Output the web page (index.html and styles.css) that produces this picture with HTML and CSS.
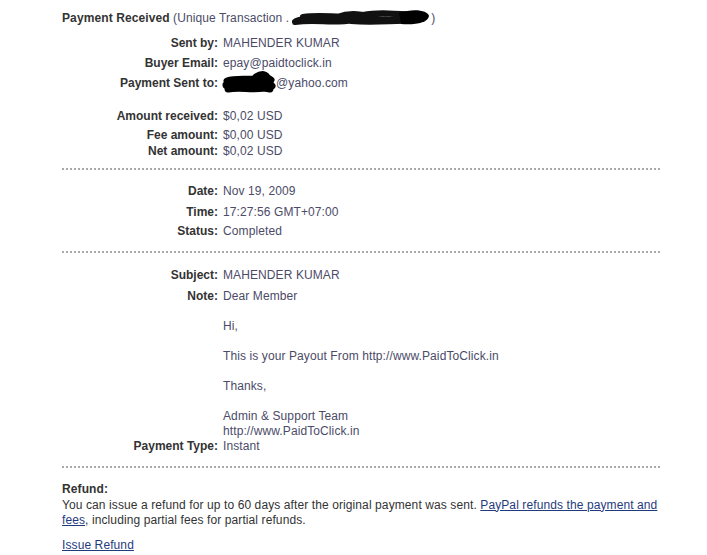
FILE: index.html
```html
<!DOCTYPE html>
<html>
<head>
<meta charset="utf-8">
<link rel="stylesheet" href="styles.css">
</head>
<body>
<div class="page">
  <div class="title"><b>Payment Received</b> (Unique Transaction .<svg class="scribble s1" width="140" height="20" viewBox="0 0 140 20"><path d="M5 13 C20 7 32 14 46 9 S72 6 86 11 S110 5 126 9 M4 14 C26 11 42 16 62 12 S96 14 116 11 M12 9 C32 6 52 11 72 7 S104 7 122 6 M60 13 C86 15 104 12 120 13" fill="none" stroke="#111" stroke-width="6" stroke-linecap="round"/><path d="M108 5 C122 0 137 2 138 8 C137 15 124 17 110 16 Z" fill="#000"/></svg>)</div>

  <div class="group g1">
    <div class="field"><span class="label">Sent by:</span><span class="value">MAHENDER KUMAR</span></div>
    <div class="field"><span class="label">Buyer Email:</span><span class="value">epay@paidtoclick.in</span></div>
    <div class="field"><span class="label">Payment Sent to:</span><span class="value"><svg class="scribble s2" width="54" height="24" viewBox="0 0 54 24"><path d="M5 10 C14 7 24 9 34 8 S45 6 49 9 M4 14 C15 12 27 14 39 13 S48 13 50 15 M6 18 C18 16 30 19 42 17 L48 18 M34 6 C40 2 44 3 46 8" fill="none" stroke="#000" stroke-width="7" stroke-linecap="round"/></svg>@yahoo.com</span></div>
  </div>

  <div class="group g2">
    <div class="field"><span class="label">Amount received:</span><span class="value">$0,02 USD</span></div>
    <div class="field f-fee"><span class="label">Fee amount:</span><span class="value">$0,00 USD</span></div>
    <div class="field f-net"><span class="label">Net amount:</span><span class="value">$0,02 USD</span></div>
  </div>

  <div class="dots d1"></div>

  <div class="group g3">
    <div class="field"><span class="label">Date:</span><span class="value">Nov 19, 2009</span></div>
    <div class="field f-time"><span class="label">Time:</span><span class="value">17:27:56 GMT+07:00</span></div>
    <div class="field f-status"><span class="label">Status:</span><span class="value">Completed</span></div>
  </div>

  <div class="dots d2"></div>

  <div class="group g4">
    <div class="field"><span class="label">Subject:</span><span class="value">MAHENDER KUMAR</span></div>
    <div class="field f-note"><span class="label">Note:</span><span class="value">Dear Member<br><br>Hi,<br><br>This is your Payout From http://www.PaidToClick.in<br><br>Thanks,<br><br>Admin &amp; Support Team<br>http://www.PaidToClick.in</span></div>
    <div class="field f-type"><span class="label">Payment Type:</span><span class="value">Instant</span></div>
  </div>

  <div class="dots d3"></div>

  <div class="refund">
    <div class="refund-title">Refund:</div>
    <p class="refund-text">You can issue a refund for up to 60 days after the original payment was sent. <a href="#">PayPal refunds the payment and fees</a>, including partial fees for partial refunds.</p>
    <a class="issue" href="#">Issue Refund</a>
  </div>
</div>
</body>
</html>
```
FILE: styles.css
```css
html, body {
  margin: 0;
  padding: 0;
  background: #fff;
}
body {
  font-family: "Liberation Sans", Arial, sans-serif;
  font-size: 12px;
  color: #4b4b68;
  letter-spacing: 0.1px;
}
.page {
  padding: 11px 0 0 62px;
  width: 599px;
}
.title {
  line-height: 15px;
  height: 15px;
  white-space: nowrap;
}
.title b {
  color: #333;
}
.scribble {
  display: inline-block;
  vertical-align: middle;
}
.s1 {
  margin: -6px 0 -4px 2px;
}
.s2 {
  margin: -8px 0 -6px -1px;
}
.group {
  display: flex;
  flex-direction: column;
  gap: 5px;
}
.field {
  display: flex;
  line-height: 15px;
}
.label {
  flex: 0 0 161px;
  text-align: right;
  font-weight: bold;
  color: #333;
  padding-right: 5px;
  box-sizing: border-box;
  white-space: nowrap;
  letter-spacing: 0;
}
.value {
  flex: 1;
}
.g1 { margin-top: 10px; }
.g2 { margin-top: 18px; }
.f-fee { margin-top: -1px; }
.f-net { margin-top: -4px; }
.g3 { margin-top: 14px; }
.f-time { margin-top: 1px; }
.f-status { margin-top: -1px; }
.g4 { margin-top: 15px; }
.f-note { margin-top: 1px; }
.f-type { margin-top: -5px; }
.dots {
  height: 2px;
  background: repeating-linear-gradient(to right, #a9a9a9 0 2px, transparent 2px 4px);
}
.d1 { margin-top: 9px; }
.d2 { margin-top: 12px; }
.d3 { margin-top: 12px; }
.refund {
  margin-top: 14px;
  line-height: 15.5px;
}
.refund-title {
  font-weight: bold;
  color: #333;
}
.refund-text {
  margin: 0;
  color: #333;
}
a {
  color: #1f3b7e;
  text-decoration: underline;
}
.issue {
  display: inline-block;
  margin-top: 9px;
}
```
